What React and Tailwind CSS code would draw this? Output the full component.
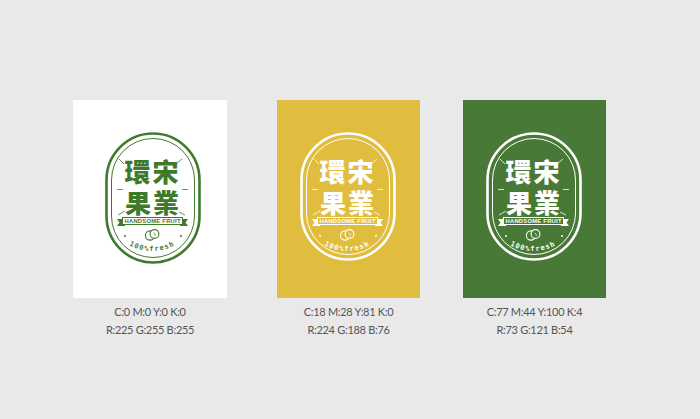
import React from "react";

function Logo({ color, bg, id, ringH }) {
  const hanzi = "font-['Noto_Sans_CJK_TC','Noto_Sans_CJK_SC',sans-serif] font-black text-[26px]";
  return (
    <svg width="96" height="134" viewBox="0 0 96 134" fill="none">
      {/* rings */}
      <rect x="1.5" y="1.5" width="93" height={ringH} rx="46.5" stroke={color} strokeWidth="2.6" />
      <rect x="6.5" y="6.5" width="83" height={ringH - 10} rx="41.5" stroke={color} strokeWidth="1" />

      {/* rays */}
      <g stroke={color} strokeWidth="0.8">
        <line x1="14" y1="27" x2="19" y2="32" />
        <line x1="77" y1="27" x2="71" y2="32" />
        <line x1="12" y1="57.5" x2="18" y2="57.5" />
        <line x1="77" y1="57.5" x2="83" y2="57.5" />
        <line x1="13" y1="83" x2="20" y2="79" />
        <line x1="80" y1="83" x2="74" y2="80" />
      </g>

      {/* name */}
      <g fill={color} textAnchor="middle">
        <text x="32.5" y="49.5" className={hanzi}>環</text>
        <text x="60.5" y="49.5" className={hanzi}>宋</text>
        <text x="33" y="80.5" className={hanzi}>果</text>
        <text x="61" y="80.5" className={hanzi}>業</text>
      </g>

      {/* ribbon */}
      <path d="M12 87 L20 87 L20 94 L12 94 L14.5 90.5 Z" fill={color} />
      <path d="M83 87 L75 87 L75 94 L83 94 L80.5 90.5 Z" fill={color} />
      <rect x="17.5" y="85.5" width="60" height="7" fill={bg} stroke={color} strokeWidth="1" />
      <text
        x="47.5"
        y="91.3"
        textAnchor="middle"
        textLength="56"
        lengthAdjust="spacing"
        fill={color}
        className="font-['Liberation_Sans',sans-serif] font-bold text-[5.8px]"
      >
        HANDSOME FRUIT
      </text>

      {/* fruit mark */}
      <circle cx="45" cy="103.5" r="4.6" stroke={color} strokeWidth="1.1" />
      <circle cx="49.5" cy="102" r="4.4" fill={bg} stroke={color} strokeWidth="1.1" />
      <path d="M48.5 101 q2 0.5 2 3" stroke={color} strokeWidth="0.7" />

      {/* dots */}
      <circle cx="20" cy="104" r="1" fill={color} />
      <circle cx="76" cy="104" r="1" fill={color} />

      {/* curved tagline */}
      <path id={id} d="M14 107 Q47 131 80 107" />
      <text fill={color} className="font-['DejaVu_Sans_Mono',monospace] font-bold text-[7px] tracking-[1.1px]">
        <textPath href={`#${id}`} startOffset="50%" textAnchor="middle">100%fresh</textPath>
      </text>
    </svg>
  );
}

function Swatch({ cardClass, width, children, cmyk, rgb }) {
  return (
    <div className={`flex flex-col ${width}`}>
      <div className={`h-[198px] pt-[32px] ${cardClass}`}>{children}</div>
      <div className="pt-[5px] text-center text-[11px] leading-[18px] tracking-[-0.3px] text-[#555555] font-['Lato',sans-serif]">
        <p>{cmyk}</p>
        <p>{rgb}</p>
      </div>
    </div>
  );
}

export default function App() {
  return (
    <div className="w-[700px] h-[419px] overflow-hidden bg-[#e9e9e9] pt-[100px] pl-[73px] flex items-start">
      <Swatch
        width="w-[154px]"
        cardClass="bg-white pl-[32px]"
        cmyk="C:0 M:0 Y:0 K:0"
        rgb="R:225 G:255 B:255"
      >
        <Logo color="#3f7a2c" bg="#ffffff" id="curve-a" ringH={129} />
      </Swatch>
      <div className="ml-[50px]">
        <Swatch
          width="w-[143px]"
          cardClass="bg-[#e0bc3f] pl-[23px]"
          cmyk="C:18 M:28 Y:81 K:0"
          rgb="R:224 G:188 B:76"
        >
          <Logo color="#ffffff" bg="#e0bc3f" id="curve-b" ringH={126} />
        </Swatch>
      </div>
      <div className="ml-[43px]">
        <Swatch
          width="w-[143px]"
          cardClass="bg-[#497936] pl-[23px]"
          cmyk="C:77 M:44 Y:100 K:4"
          rgb="R:73 G:121 B:54"
        >
          <Logo color="#ffffff" bg="#497936" id="curve-c" ringH={126} />
        </Swatch>
      </div>
    </div>
  );
}
